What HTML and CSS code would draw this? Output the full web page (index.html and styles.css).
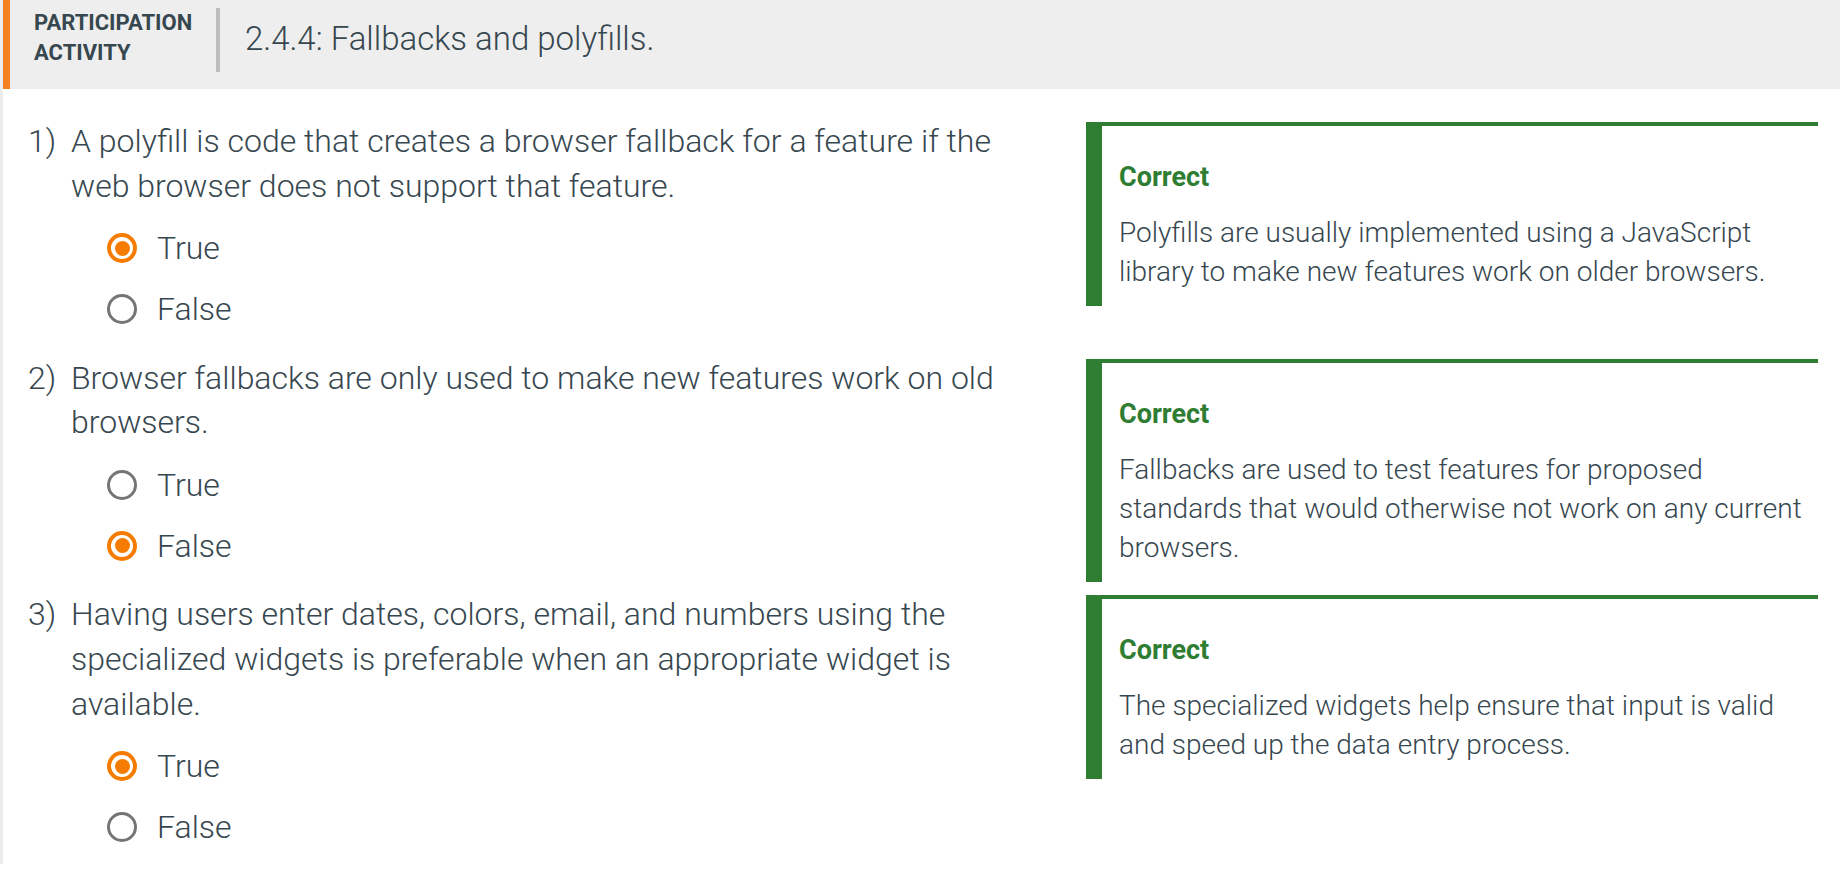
FILE: index.html
```html
<!DOCTYPE html>
<html lang="en">
<head>
<meta charset="utf-8">
<title>2.4.4: Fallbacks and polyfills.</title>
<link rel="stylesheet" href="styles.css">
</head>
<body>
<div class="card">
  <div class="header">
    <div class="label">PARTICIPATION<br>ACTIVITY</div>
    <div class="divider"></div>
    <div class="title">2.4.4: Fallbacks and polyfills.</div>
  </div>
  <div class="content">
    <div class="q-row">
      <div class="question">
        <div class="prompt"><span class="num">1)</span><span class="text">A polyfill is code that creates a browser fallback for a feature if the web browser does not support that feature.</span></div>
        <div class="options">
          <div class="option"><span class="radio checked"></span><span class="opt-label">True</span></div>
          <div class="option"><span class="radio"></span><span class="opt-label">False</span></div>
        </div>
      </div>
      <div class="feedback">
        <div class="fb-title">Correct</div>
        <div class="fb-text">Polyfills are usually implemented using a JavaScript library to make new features work on older browsers.</div>
      </div>
    </div>
    <div class="q-row">
      <div class="question">
        <div class="prompt"><span class="num">2)</span><span class="text">Browser fallbacks are only used to make new features work on old browsers.</span></div>
        <div class="options">
          <div class="option"><span class="radio"></span><span class="opt-label">True</span></div>
          <div class="option"><span class="radio checked"></span><span class="opt-label">False</span></div>
        </div>
      </div>
      <div class="feedback">
        <div class="fb-title">Correct</div>
        <div class="fb-text">Fallbacks are used to test features for proposed standards that would otherwise not work on any current browsers.</div>
      </div>
    </div>
    <div class="q-row">
      <div class="question">
        <div class="prompt"><span class="num">3)</span><span class="text">Having users enter dates, colors, email, and numbers using the specialized widgets is preferable when an appropriate widget is available.</span></div>
        <div class="options">
          <div class="option"><span class="radio checked"></span><span class="opt-label">True</span></div>
          <div class="option"><span class="radio"></span><span class="opt-label">False</span></div>
        </div>
      </div>
      <div class="feedback">
        <div class="fb-title">Correct</div>
        <div class="fb-text">The specialized widgets help ensure that input is valid and speed up the data entry process.</div>
      </div>
    </div>
  </div>
</div>
</body>
</html>
```

FILE: styles.css
```css
html, body {
  margin: 0;
  padding: 0;
  background: #ffffff;
}

body {
  font-family: Roboto, "Liberation Sans", sans-serif;
  color: #37474f;
}

.card {
  width: 1840px;
  box-sizing: border-box;
  border-left: 3px solid #ececec;
  background: #ffffff;
  box-shadow: 0 2px 4px rgba(0, 0, 0, 0.28);
}

.header {
  display: flex;
  align-items: flex-start;
  height: 89px;
  box-sizing: border-box;
  padding: 8px 0 17px 24px;
  background: #eeeeee;
  border-left: 7px solid #f58220;
}

.label {
  font-weight: 700;
  font-size: 22px;
  line-height: 30px;
  width: 157px;
  white-space: nowrap;
  color: #37474f;
}

.divider {
  width: 4px;
  height: 64px;
  background: #bdbdbd;
  margin-left: 25px;
}

.title,
.prompt,
.option,
.fb-text {
  font-family: "Roboto Light", Roboto, "Liberation Sans", sans-serif;
  font-weight: 300;
}

.title {
  margin-left: 25px;
  margin-top: 11px;
  font-size: 33px;
  line-height: 40px;
  color: #37474f;
}

.content {
  padding: 30px 22px 6px 25px;
}

.q-row {
  display: flex;
  align-items: flex-start;
  margin-bottom: 16px;
}

.q-row:last-child {
  margin-bottom: 0;
}

.question {
  flex: 1;
  min-width: 0;
}

.prompt {
  display: flex;
  font-size: 32px;
  line-height: 44.8px;
}

.num {
  flex: none;
  width: 43px;
}

.text {
  flex: 1;
  padding-right: 20px;
}

.options {
  margin-top: 9px;
  padding-left: 79px;
}

.option {
  display: flex;
  align-items: center;
  height: 61px;
  font-size: 32px;
}

.radio {
  flex: none;
  width: 30px;
  height: 30px;
  box-sizing: border-box;
  border-radius: 50%;
  border: 3.5px solid #757575;
  position: relative;
}

.radio.checked {
  border: 4px solid #f57c00;
}

.radio.checked::after {
  content: "";
  position: absolute;
  left: 3.5px;
  top: 3.5px;
  width: 15px;
  height: 15px;
  border-radius: 50%;
  background: #f57c00;
}

.opt-label {
  margin-left: 20px;
}

.feedback {
  flex: none;
  width: 732px;
  box-sizing: border-box;
  margin-top: 3px;
  margin-bottom: -10px;
  margin-left: 46px;
  border-top: 4px solid #2e7d32;
  border-left: 16px solid #2e7d32;
  padding: 32px 16px 15px 17px;
}

.fb-title {
  font-weight: 700;
  font-size: 27px;
  line-height: 38px;
  color: #2e7d32;
}

.fb-text {
  margin-top: 17px;
  font-size: 28px;
  line-height: 39px;
  color: #37474f;
}
```
